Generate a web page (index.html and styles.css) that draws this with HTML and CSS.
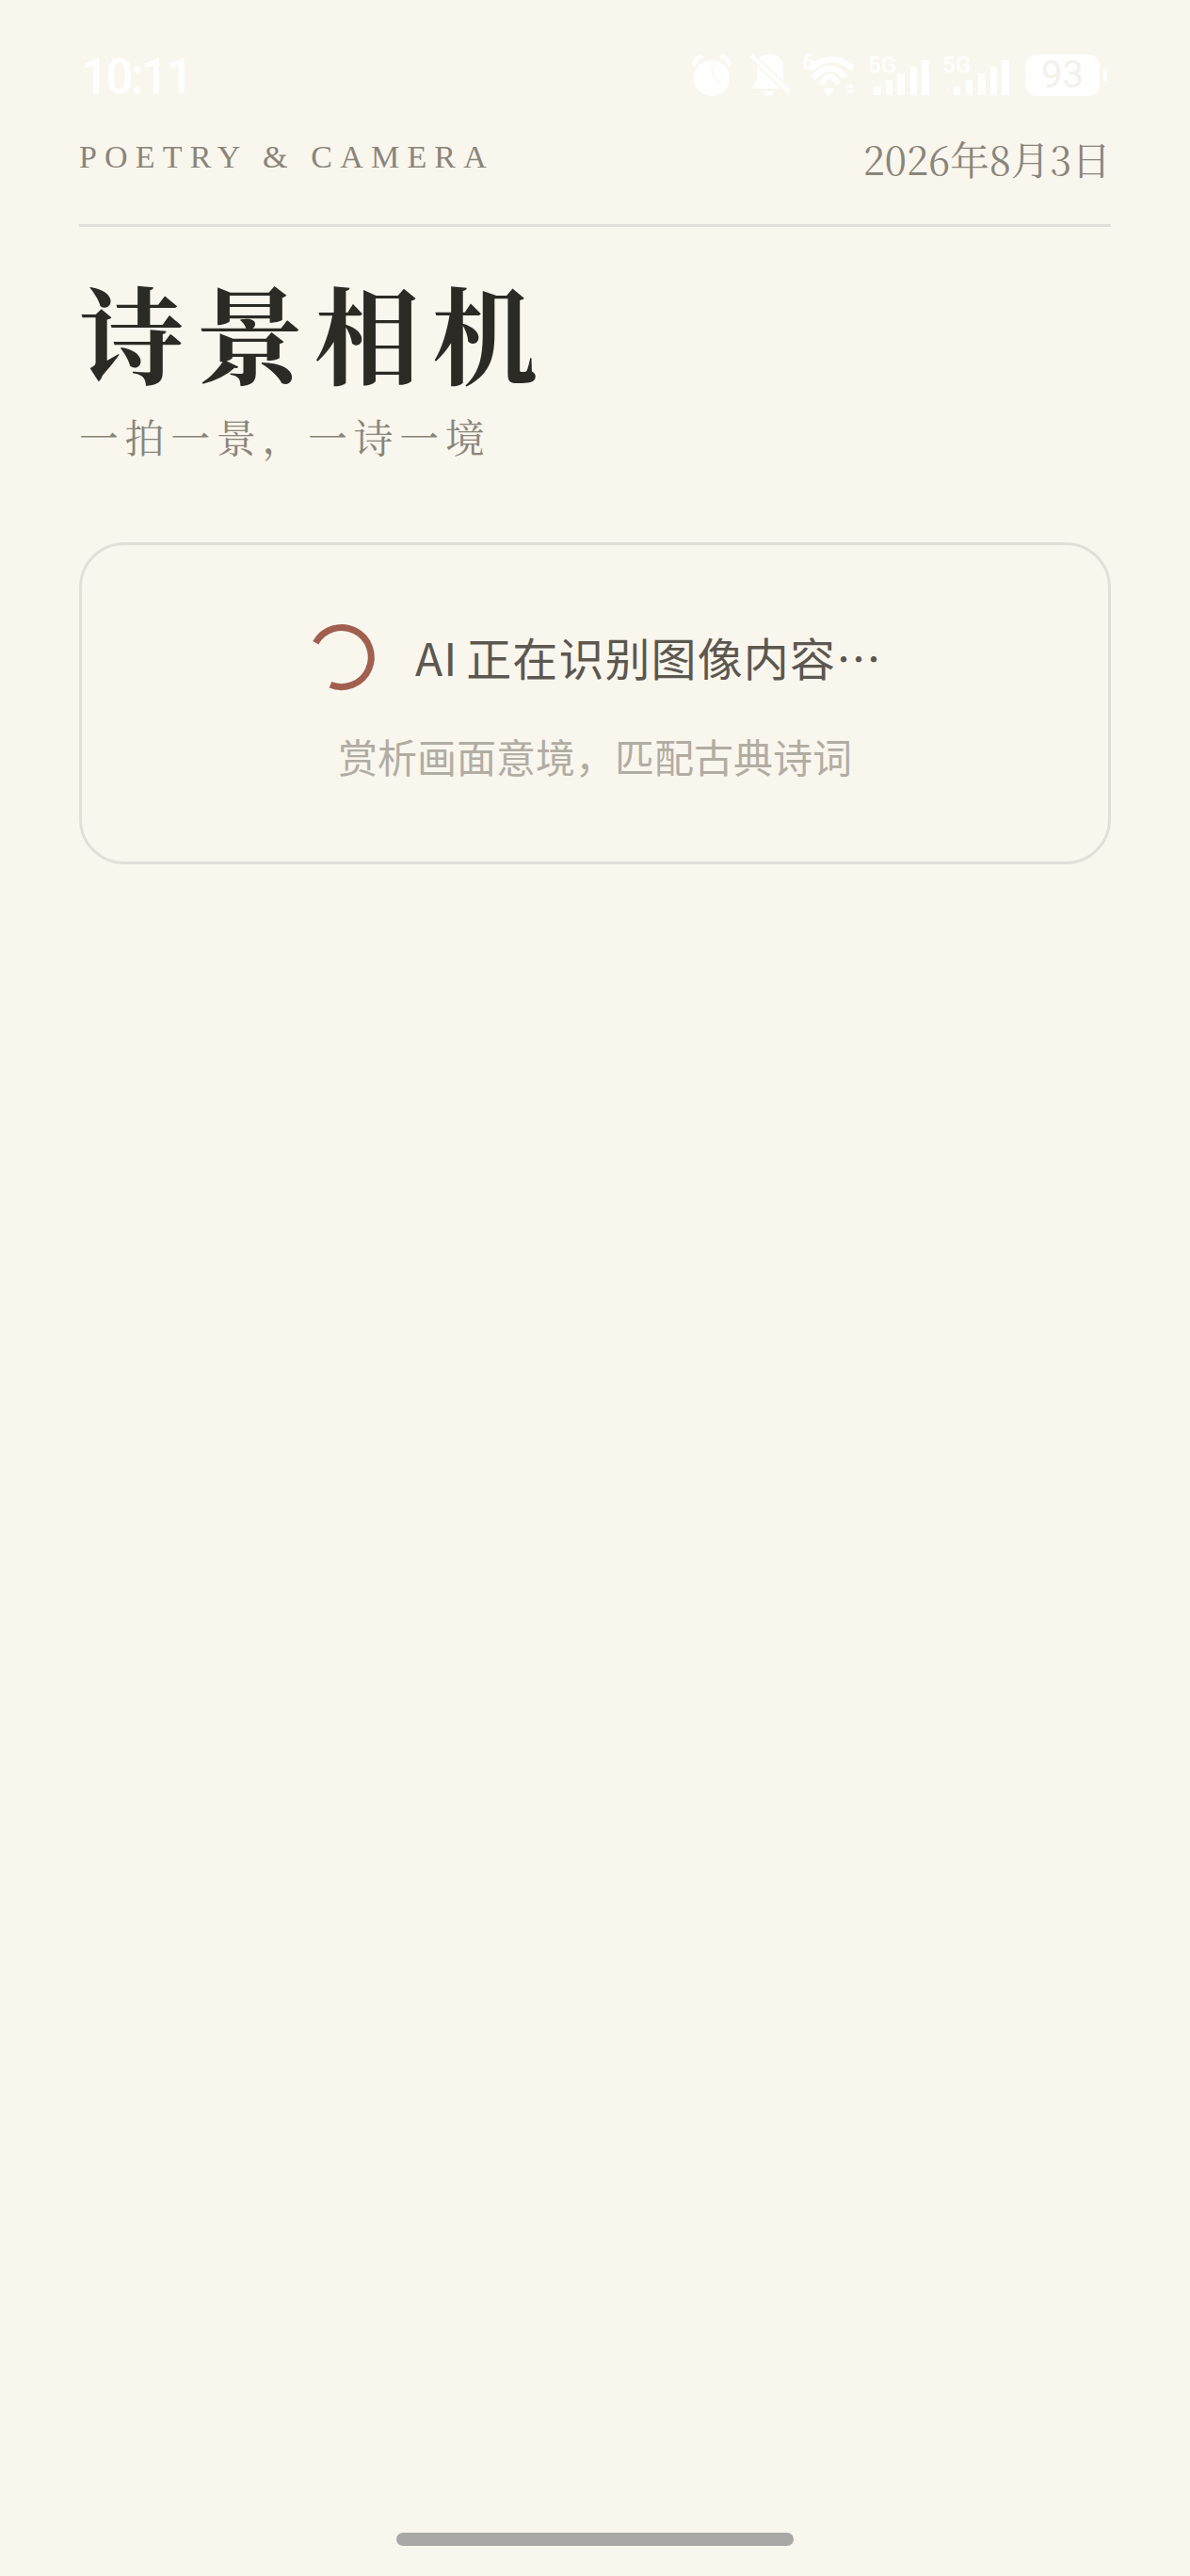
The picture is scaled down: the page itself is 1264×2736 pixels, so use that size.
FILE: index.html
```html
<!DOCTYPE html>
<html lang="zh-CN">
<head>
    <meta charset="UTF-8">
    <meta name="viewport" content="width=device-width, initial-scale=1.0">
    <title>诗景相机</title>
    <link rel="stylesheet" href="styles.css">
</head>
<body>
    <div class="page">
        <div class="status-bar">
            <span class="status-time">10:11</span>
            <div class="status-icons">
                <svg class="icon-alarm" width="43" height="44" viewBox="0 0 43 44">
                    <circle cx="21" cy="25" r="19" fill="#fff"/>
                    <path d="M0 10 Q2 2 10 0 L13 3 Q5 6 3 13 Z M42 10 Q40 2 32 0 L29 3 Q37 6 39 13 Z" fill="#fff"/>
                    <path d="M21 11 L22 22 L30 31" fill="none" stroke="#f9f6ee" stroke-width="1.5"/>
                </svg>
                <svg class="icon-bell" width="45" height="44" viewBox="0 0 45 44">
                    <path d="M11 3 Q17 0 24 0 Q37 1 37 15 V28 Z M9 12 L33 36 H2 Q8 32 9 24 Z M16 39 H27 Q25 44 21.500 44 Q18 44 16 39 Z" fill="#fff"/>
                    <path d="M3 1 L43 39" stroke="#fff" stroke-width="4"/>
                </svg>
                <svg class="icon-wifi" width="60" height="44" viewBox="0 0 60 44">
                    <text x="2" y="16" class="icon-label">6</text>
                    <path d="M11 15 Q33 -5 56 15 M14 25 Q31 5 48 24 M22 32 Q31 15 40 31" fill="none" stroke="#fff" stroke-width="6"/>
                    <path d="M24 37 Q30 33 36 37 L30 44 Z M49 35 L53 31 L57 35 Z M49 37 H57 L53 42 Z" fill="#fff"/>
                </svg>
                <svg class="icon-signal-a" width="65" height="44" viewBox="0 0 65 44">
                    <text x="0" y="19" class="icon-label">5G</text>
                    <rect x="6" y="34" width="8" height="9" fill="#fff"/>
                    <rect x="19" y="27" width="7" height="16" fill="#fff"/>
                    <rect x="31" y="20" width="8" height="23" fill="#fff"/>
                    <rect x="45" y="13" width="7" height="30" fill="#fff"/>
                    <rect x="57" y="6" width="8" height="37" fill="#fff"/>
                </svg>
                <svg class="icon-signal-b" width="71" height="44" viewBox="0 0 71 44">
                    <text x="0" y="19" class="icon-label">5G</text>
                    <path d="M4 33 L9 41 M9 33 L4 41" stroke="#fff" stroke-width="1" opacity="0.500"/>
                    <rect x="12" y="34" width="7" height="9" fill="#fff"/>
                    <rect x="25" y="27" width="7" height="16" fill="#fff"/>
                    <rect x="38" y="20" width="8" height="23" fill="#fff"/>
                    <rect x="51" y="13" width="7" height="30" fill="#fff"/>
                    <rect x="63" y="6" width="8" height="37" fill="#fff"/>
                </svg>
                <div class="battery">
                    <span class="battery-body">93</span>
                    <span class="battery-nub"></span>
                </div>
            </div>
        </div>

        <header class="top-row">
            <span class="brand">POETRY &amp; CAMERA</span>
            <span class="date">2026年8月3日</span>
        </header>

        <h1 class="title">诗景相机</h1>
        <p class="subtitle">一拍一景，一诗一境</p>

        <section class="loading-card">
            <div class="loading-row">
                <svg class="spinner" width="72" height="72" viewBox="4 4 72 72">
                    <path d="M12.300 25.700 A31.500 31.500 0 1 1 28 70.300" fill="none" stroke="#a1604f" stroke-width="7"/>
                </svg>
                <span class="loading-text">AI 正在识别图像内容…</span>
            </div>
            <p class="loading-hint">赏析画面意境，匹配古典诗词</p>
        </section>

        <div class="home-bar"></div>
    </div>
</body>
</html>
```

FILE: styles.css
```css
:root {
    --bg-color: #f9f6ee;
    --line-color: #e2dfd8;
    --text-dark: #2c2a25;
    --text-body: #5c574f;
    --text-muted: #8a8579;
    --text-faint: #b1ada3;
    --serif: "Noto Serif CJK SC", "Liberation Serif", serif;
    --sans: "Noto Sans CJK SC", "Noto Sans", sans-serif;
}

body {
    margin: 0;
    background: var(--bg-color);
}

svg {
    overflow: visible;
}

.page {
    height: 2736px;
    box-sizing: border-box;
    padding: 58px 84px 32px;
    display: flex;
    flex-direction: column;
}

/* status bar */
.status-bar {
    height: 44px;
    display: flex;
    justify-content: space-between;
    align-items: center;
    padding-right: 4px;
}

.status-time {
    font-family: Roboto, sans-serif;
    font-size: 51px;
    font-weight: 500;
    line-height: 44px;
    letter-spacing: -2.5px;
    color: #fff;
    padding: 4px 0 0 2px;
}

.status-icons {
    display: flex;
    align-items: center;
}

.icon-bell {
    margin-left: 17px;
}

.icon-wifi {
    margin-left: 10px;
}

.icon-signal-a {
    margin-left: 12px;
}

.icon-signal-b {
    margin-left: 14px;
}

.icon-label {
    font-family: Roboto, sans-serif;
    font-size: 24px;
    font-weight: 500;
    fill: #fff;
}

.battery {
    display: flex;
    align-items: center;
    gap: 4px;
    margin-left: 17px;
}

.battery-body {
    width: 79px;
    height: 44px;
    border-radius: 13px;
    background: #fff;
    color: #f3f1ea;
    font-family: Roboto, sans-serif;
    font-size: 40px;
    line-height: 44px;
    text-align: center;
}

.battery-nub {
    width: 4px;
    height: 14px;
    border-radius: 0 3px 3px 0;
    background: #fff;
}

/* header */
.top-row {
    height: 95px;
    margin-top: 41px;
    border-bottom: 3px solid var(--line-color);
    display: flex;
    justify-content: space-between;
    align-items: flex-start;
}

.brand {
    font-family: "Liberation Serif", serif;
    font-size: 34px;
    line-height: 47px;
    letter-spacing: 8.2px;
    color: var(--text-muted);
}

.date {
    font-family: var(--serif);
    font-size: 41.5px;
    line-height: 50px;
    color: var(--text-muted);
}

.title {
    margin: 41px 0 0;
    font-family: var(--serif);
    font-size: 112px;
    font-weight: 700;
    line-height: 140px;
    letter-spacing: 13px;
    color: var(--text-dark);
}

.subtitle {
    margin: 16px 0 0;
    font-family: var(--serif);
    font-size: 42px;
    line-height: 50px;
    letter-spacing: 6.6px;
    color: var(--text-muted);
}

/* loading card */
.loading-card {
    margin-top: 88px;
    height: 342px;
    box-sizing: border-box;
    border: 3px solid var(--line-color);
    border-radius: 48px;
    display: flex;
    flex-direction: column;
    align-items: center;
    padding-top: 78px;
}

.loading-row {
    display: flex;
    align-items: center;
    gap: 42px;
    height: 80px;
}

.loading-text {
    font-family: var(--sans);
    font-size: 48px;
    line-height: 60px;
    letter-spacing: 1.1px;
    word-spacing: -3px;
    color: var(--text-body);
}

.loading-hint {
    margin: 36px 0 0;
    font-family: var(--sans);
    font-size: 42px;
    line-height: 60px;
    color: var(--text-faint);
}

.home-bar {
    width: 422px;
    height: 14px;
    margin: auto auto 0;
    border-radius: 7px;
    background: #aaa8a4;
}
```
